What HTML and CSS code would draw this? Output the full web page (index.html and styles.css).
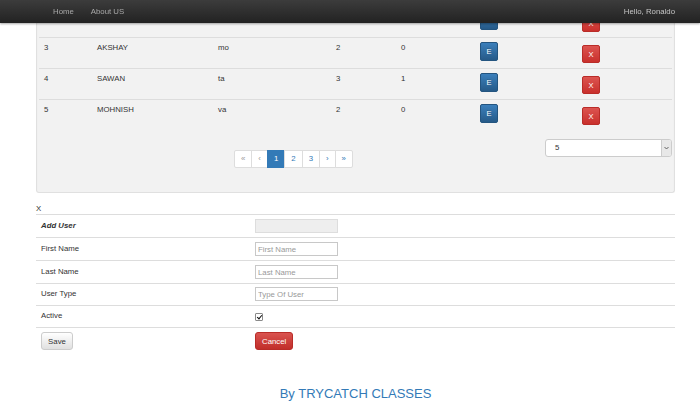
FILE: index.html
```html
<!DOCTYPE html>
<html lang="en">
<head>
    <meta charset="UTF-8">
    <meta name="viewport" content="width=device-width, initial-scale=1.0">
    <title>Users - TryCatch Classes</title>
    <link rel="stylesheet" href="styles.css">
</head>
<body>
    <nav class="navbar">
        <div class="nav-inner">
            <a class="nav-link" href="#">Home</a>
            <a class="nav-link" href="#">About US</a>
            <span class="nav-user">Hello, Ronaldo</span>
        </div>
    </nav>

    <main class="page">
        <div class="well">
            <table class="user-table">
                <colgroup>
                    <col class="c-id"><col class="c-name"><col class="c-last"><col class="c-type"><col class="c-active"><col class="c-edit"><col>
                </colgroup>
                <tbody>
                    <tr>
                        <td></td><td></td><td></td><td></td><td></td>
                        <td><button class="btn-e">E</button></td>
                        <td><button class="btn-x">X</button></td>
                    </tr>
                    <tr>
                        <td>3</td><td>AKSHAY</td><td>mo</td><td>2</td><td>0</td>
                        <td><button class="btn-e">E</button></td>
                        <td><button class="btn-x">X</button></td>
                    </tr>
                    <tr>
                        <td>4</td><td>SAWAN</td><td>ta</td><td>3</td><td>1</td>
                        <td><button class="btn-e">E</button></td>
                        <td><button class="btn-x">X</button></td>
                    </tr>
                    <tr>
                        <td>5</td><td>MOHNISH</td><td>va</td><td>2</td><td>0</td>
                        <td><button class="btn-e">E</button></td>
                        <td><button class="btn-x">X</button></td>
                    </tr>
                </tbody>
            </table>
            <div class="pager-row">
                <ul class="pagination">
                    <li><a href="#">&laquo;</a></li>
                    <li><a href="#">&lsaquo;</a></li>
                    <li class="active"><a href="#">1</a></li>
                    <li><a href="#">2</a></li>
                    <li><a href="#">3</a></li>
                    <li><a href="#">&rsaquo;</a></li>
                    <li><a href="#">&raquo;</a></li>
                </ul>
                <div class="page-size">
                    <span class="page-size-value">5</span>
                    <span class="page-size-arrow">
                        <svg width="5" height="4" viewBox="0 0 5 4"><path d="M0.5 1 L2.5 3 L4.5 1" fill="none" stroke="#555" stroke-width="0.9"/></svg>
                    </span>
                </div>
            </div>
        </div>

        <div class="close-x">X</div>
        <table class="form-table">
            <colgroup><col class="f-label"><col></colgroup>
            <tbody>
                <tr>
                    <td class="form-title">Add User</td>
                    <td><input type="text" class="field" disabled></td>
                </tr>
                <tr>
                    <td>First Name</td>
                    <td><input type="text" class="field" placeholder="First Name"></td>
                </tr>
                <tr>
                    <td>Last Name</td>
                    <td><input type="text" class="field" placeholder="Last Name"></td>
                </tr>
                <tr class="short-row">
                    <td>User Type</td>
                    <td><input type="text" class="field" placeholder="Type Of User"></td>
                </tr>
                <tr class="short-row">
                    <td>Active</td>
                    <td><input type="checkbox" class="check" checked></td>
                </tr>
                <tr>
                    <td><button class="btn-save">Save</button></td>
                    <td><button class="btn-cancel">Cancel</button></td>
                </tr>
            </tbody>
        </table>

        <footer class="credit">By TRYCATCH CLASSES</footer>
    </main>
</body>
</html>
```

FILE: styles.css
```css
body {
    margin: 0;
    font-family: "Liberation Sans", Arial, sans-serif;
    font-size: 7.8px;
    line-height: 12px;
    color: #333;
    background: #fff;
}
a {
    text-decoration: none;
}

/* top bar */
.navbar {
    position: fixed;
    top: 0;
    left: 0;
    right: 0;
    height: 23px;
    z-index: 10;
    background: linear-gradient(#3c3c3c, #222);
    box-shadow: 0 1px 2px rgba(0, 0, 0, 0.35);
}
.nav-inner {
    display: flex;
    align-items: center;
    height: 23px;
    padding: 0 25px 0 44.5px;
}
.nav-link {
    padding: 0 8.5px;
    color: #a8a8a8;
}
.nav-user {
    margin-left: auto;
    color: #c4c4c4;
}

.page {
    padding: 0 25px 0 36px;
}

/* users list */
.well {
    background: #f2f2f2;
    border: 1px solid #e0e0e0;
    border-top: none;
    border-radius: 0 0 3px 3px;
    padding: 6px 2px 0;
    box-shadow: inset 0 1px 2px rgba(0, 0, 0, 0.04);
}
.user-table {
    width: 100%;
    border-collapse: collapse;
    table-layout: fixed;
}
.c-id { width: 53px; }
.c-name { width: 121px; }
.c-last { width: 118px; }
.c-type { width: 65px; }
.c-active { width: 79px; }
.c-edit { width: 102px; }
.user-table td {
    border-top: 1px solid #ddd;
    padding: 4px 5px 5px;
    vertical-align: top;
    color: #333;
}
.btn-e,
.btn-x {
    display: block;
    margin: 0;
    padding: 0;
    font-family: inherit;
    font-size: 7.5px;
    color: #fff;
    border-radius: 2px;
    cursor: pointer;
}
.btn-e {
    width: 18px;
    height: 19px;
    background: linear-gradient(#3b7fbb, #265a88);
    border: 1px solid #245580;
    text-shadow: 0 -1px 0 rgba(0, 0, 0, 0.2);
}
.btn-x {
    width: 18px;
    height: 18px;
    margin-top: 3px;
    background: linear-gradient(#dc5450, #c9302c);
    border: 1px solid #b92c28;
}

.pager-row {
    display: flex;
    align-items: flex-start;
    padding: 10px 0 24px;
}
.pagination {
    display: flex;
    list-style: none;
    margin: 10px 0 0 195px;
    padding: 0;
}
.pagination li a {
    display: block;
    height: 16px;
    line-height: 16px;
    padding: 0 6px;
    margin-left: -1px;
    background: #fff;
    border: 1px solid #ddd;
    color: #337ab7;
}
.pagination li:first-child a {
    margin-left: 0;
    border-radius: 2px 0 0 2px;
    color: #999;
}
.pagination li:nth-child(2) a {
    color: #999;
}
.pagination li:last-child a {
    border-radius: 0 2px 2px 0;
}
.pagination li.active a {
    background: #337ab7;
    border-color: #337ab7;
    color: #fff;
}
.page-size {
    display: flex;
    margin: -1px 0 0 auto;
    width: 125px;
    height: 16px;
    border: 1px solid #ccc;
    border-radius: 3px;
    background: #fff;
    overflow: hidden;
}
.page-size-value {
    flex: 1;
    padding-left: 9px;
    line-height: 16px;
}
.page-size-arrow {
    width: 9px;
    display: flex;
    align-items: center;
    justify-content: center;
    background: #e8e8e8;
    border-left: 1px solid #ccc;
}

/* add user form */
.close-x {
    margin-top: 10px;
    line-height: 11px;
    color: #333;
}
.form-table {
    width: 100%;
    border-collapse: collapse;
    table-layout: fixed;
}
.f-label { width: 214px; }
.form-table td {
    border-top: 1px solid #ddd;
    padding: 4px 5px;
    line-height: 14px;
    vertical-align: top;
}
.form-table .short-row td {
    padding-top: 3px;
}
.form-title {
    font-weight: bold;
    font-style: italic;
}
.field {
    display: block;
    box-sizing: border-box;
    width: 83px;
    height: 14px;
    margin: 0;
    padding: 0 2px;
    border: 1px solid #c8c8c8;
    font-family: inherit;
    font-size: 7.8px;
    color: #333;
    background: #fff;
}
.field::placeholder {
    color: #999;
}
.field:disabled {
    background: #eee;
    border-color: #ddd;
}
.check {
    appearance: none;
    position: relative;
    display: block;
    box-sizing: border-box;
    width: 8px;
    height: 8px;
    margin: 4px 0 2px;
    border: 1px solid #8a8a8a;
    border-radius: 1px;
    background: #fff;
}
.check:checked::after {
    content: "";
    position: absolute;
    left: 1.5px;
    top: 0;
    width: 2px;
    height: 4px;
    border: solid #111;
    border-width: 0 1.2px 1.2px 0;
    transform: rotate(40deg);
}
.btn-save,
.btn-cancel {
    display: block;
    height: 18px;
    margin: 0;
    padding: 0 6px;
    font-family: inherit;
    font-size: 7.8px;
    border-radius: 3px;
    cursor: pointer;
}
.btn-save {
    width: 32px;
    color: #333;
    background: linear-gradient(#fff, #e0e0e0);
    border: 1px solid #ccc;
}
.btn-cancel {
    width: 38px;
    color: #fff;
    background: linear-gradient(#d9534f, #c12e2a);
    border: 1px solid #b92c28;
}

.credit {
    margin-top: 32px;
    text-align: center;
    font-size: 13px;
    line-height: 15px;
    color: #337ab7;
}
```
